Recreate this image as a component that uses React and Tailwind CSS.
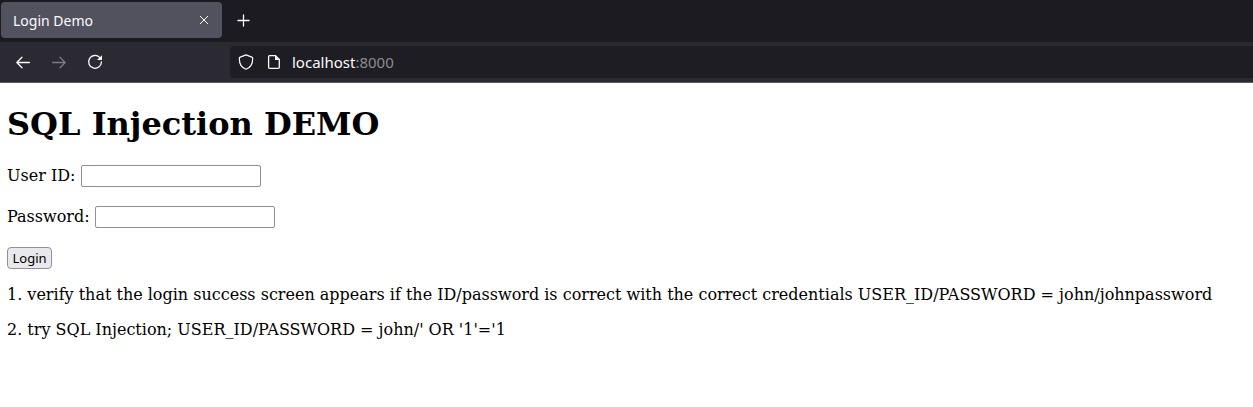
import React from "react";

function Tab({ title }) {
  return (
    <div className="flex h-9 w-[221px] items-center justify-between rounded bg-[#52525e] pl-3 pr-3">
      <span className="whitespace-nowrap pt-0.5 text-[14px] leading-5 text-[#fbfbfe]">{title}</span>
      <svg width="12" height="12" viewBox="0 0 12 12" fill="none" stroke="#fbfbfe" strokeWidth="1" strokeLinecap="round">
        <path d="M2.2 2.2l7.6 7.6M9.8 2.2l-7.6 7.6" />
      </svg>
    </div>
  );
}

function Toolbar() {
  return (
    <div className="flex h-[41px] items-center border-b border-[#5b5b66] bg-[#2b2a33]">
      <div className="flex w-[230px] items-center gap-5 pl-[15px]">
        <svg width="16" height="16" viewBox="0 0 16 16" fill="none" stroke="#fbfbfe" strokeWidth="1.3" strokeLinecap="round" strokeLinejoin="round">
          <path d="M14.4 8.5H1.8M7 3.3L1.8 8.5L7 13.7" />
        </svg>
        <svg width="16" height="16" viewBox="0 0 16 16" fill="none" stroke="#7b7a82" strokeWidth="1.3" strokeLinecap="round" strokeLinejoin="round">
          <path d="M1.6 8.5H14.2M9 3.3L14.2 8.5L9 13.7" />
        </svg>
        <svg width="16" height="16" viewBox="0 0 16 16" fill="none">
          <path d="M12.6 3.4A6.4 6.4 0 1 0 14.4 8" stroke="#fbfbfe" strokeWidth="1.3" strokeLinecap="round" />
          <path d="M15 1.2V5.6a.5.5 0 0 1-.5.5H10z" fill="#fbfbfe" />
        </svg>
      </div>
      <div className="flex h-8 flex-1 items-center rounded-l bg-[#1e1d23] pl-2">
        <svg width="16" height="16" viewBox="0 0 16 16" fill="none" stroke="#fbfbfe" strokeWidth="1.2" strokeLinejoin="round">
          <path d="M8 .9L13.8 3.1Q14.7 3.5 14.7 4.4C14.7 9.4 12.5 13.6 8 15.2C3.5 13.6 1.3 9.4 1.3 4.4Q1.3 3.5 2.2 3.1Z" />
        </svg>
        <svg className="ml-3" width="16" height="16" viewBox="0 0 16 16" fill="none">
          <path d="M3.6 1.7H9.6L13.3 5.4V13.3a1 1 0 0 1-1 1H3.6a1 1 0 0 1-1-1V2.7a1 1 0 0 1 1-1Z" stroke="#fbfbfe" strokeWidth="1.3" strokeLinejoin="round" />
          <path d="M9 1.5V6H13.6Z" fill="#fbfbfe" />
        </svg>
        <span className="ml-2.5 whitespace-nowrap text-[15px] leading-5 text-[#fbfbfe]">
          localhost<span className="text-[#8c8b91]">:8000</span>
        </span>
      </div>
    </div>
  );
}

function Field({ label, type }) {
  return (
    <label className="flex h-[22px] items-start gap-[5.4px]">
      <span className="whitespace-nowrap leading-[21px]">{label}</span>
      <input type={type} className="h-[22px] w-[180px] rounded-[2px] border border-[#8f8f9d] bg-white px-1 outline-none" />
    </label>
  );
}

export default function App() {
  return (
    <div className="h-[407px] overflow-hidden bg-white">
      <header className="font-['Noto_Sans',sans-serif]">
        <div className="flex h-[42px] items-start bg-[#1c1b22] pl-px pt-0.5">
          <Tab title="Login Demo" />
          <svg className="ml-[14px] mt-[11px]" width="16" height="16" viewBox="0 0 16 16" fill="none" stroke="#fbfbfe" strokeWidth="1.3" strokeLinecap="round">
            <path d="M7.5 2v11M2 7.5h11" />
          </svg>
        </div>
        <Toolbar />
      </header>
      <main className="px-[7px] pt-[22px] font-['DejaVu_Serif',serif] text-[16px] text-black">
        <h1 className="whitespace-nowrap text-[32px] font-bold leading-[38px]">SQL Injection DEMO</h1>
        <form className="mt-[22px] flex flex-col items-start gap-[19px]" onSubmit={(e) => e.preventDefault()}>
          <Field label="User ID:" type="text" />
          <Field label="Password:" type="password" />
          <button className="flex h-[22px] w-[45px] items-center justify-center rounded border border-[#8f8f9d] bg-[#e9e9ed] font-['Noto_Sans',sans-serif] text-[13px] leading-[18px]">
            Login
          </button>
        </form>
        <p className="mt-4 whitespace-nowrap leading-[19px]">
          1. verify that the login success screen appears if the ID/password is correct with the correct credentials USER_ID/PASSWORD = john/johnpassword
        </p>
        <p className="mt-4 whitespace-nowrap leading-[19px]">
          2. try SQL Injection; USER_ID/PASSWORD = john/' OR '1'='1
        </p>
      </main>
    </div>
  );
}
